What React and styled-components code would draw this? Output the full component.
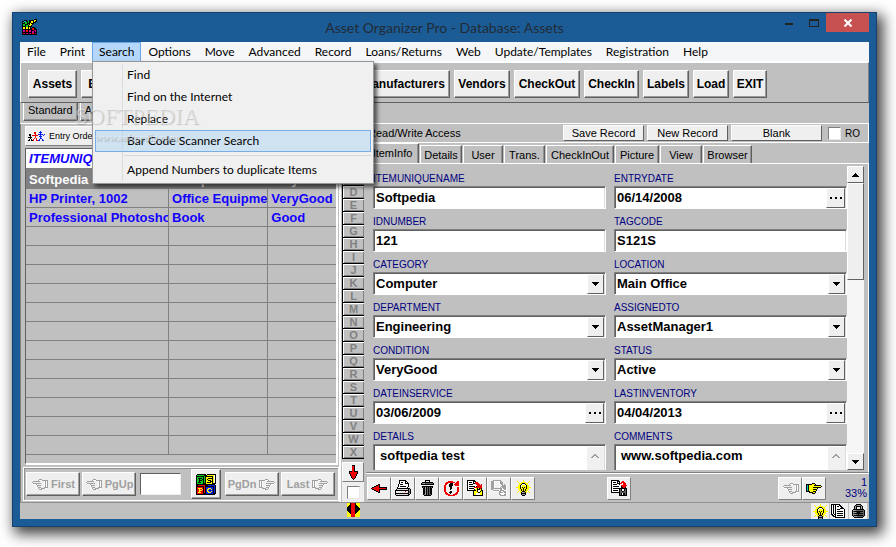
import React from "react";
import { useState } from "react";
import styled, { createGlobalStyle } from "styled-components";

const GlobalStyle = createGlobalStyle`
  * {
    box-sizing: border-box;
  }
  body {
    margin: 0;
    background: #fff;
    font-family: "Liberation Sans", Arial, sans-serif;
    font-size: 11px;
    color: #000;
  }
  svg {
    display: block;
    flex: none;
  }
  button, input, select, textarea {
    font: inherit;
    color: inherit;
    margin: 0;
    padding: 0;
    border: 0;
    border-radius: 0;
    outline: 0;
    background: none;
  }
`;

/* ---------- pixel icons ---------- */

const palette = {
  K: "#000",
  W: "#fff",
  R: "#f00000",
  Y: "#ffff00",
  L: "#d8d8d8",
  G: "#a0a0a0",
  D: "#606060",
  C: "#00c8c8",
  B: "#0020e8",
  N: "#00d020",
  M: "#d000a0",
};

const PixelIcon = ({ rows }) => {
  const width = Math.max(...rows.map((row) => row.length));
  return (
    <svg
      width={width}
      height={rows.length}
      viewBox={`0 0 ${width} ${rows.length}`}
      shapeRendering="crispEdges"
      aria-hidden="true"
    >
      {rows.map((row, y) =>
        row
          .split("")
          .map((c, x) =>
            palette[c] ? (
              <rect key={`${x}-${y}`} x={x} y={y} width="1" height="1" fill={palette[c]} />
            ) : null
          )
      )}
    </svg>
  );
};

const icons = {
  app: [
    "............KKK",
    "..KKK..KKKKKYYK",
    "KKCCKKNKKYYKYKK",
    "KCKNNKNKKYYKKK.",
    "KKKNNKKKYKKK...",
    "KNNKKKNKYYK....",
    "KNNKNNKYYK.....",
    "KKKKNNKKKK.....",
    "KYYKYYKYK.KKK..",
    "KYYKYYKYKKRRKK.",
    "KKKKKKKKKKRRKKK",
    "KMMKRRKMMKKKMMK",
    "KMMKRRKMMKMMKMK",
    "KKKKKKKKKKMMKKK",
    "KRRKMMKMMKRRKMK",
    "KKKKKKKKKKKKKKK",
  ],
  people: [
    "............B....",
    "......RR...BBB...",
    "......RR....B....",
    ".KK....R..BBBBB.B",
    ".KK.RRRRRR..B..B.",
    "..K....R...BBB...",
    "KKKK...R....B....",
    "..K...R.R...BB...",
    ".K.K.R..R..B..B..",
    "KK.KKR..RRBB..BB.",
  ],
  left: [
    ".......KK.......",
    ".....KKRK.......",
    "...KKRRRK.......",
    ".KKRRRRRKKKKKKKK",
    "KRRRRRRRRRRRRRRK",
    ".KKRRRRRKKKKKKKK",
    "...KKRRRK.......",
    ".....KKRK.......",
    ".......KK.......",
  ],
  down: [
    "...KKK...",
    "...RRK...",
    "...RRK...",
    "...RRK...",
    "...RRK...",
    "...RRK...",
    "KKKRRKKKK",
    "KRRRRRRRK",
    "KRRRRRRRK",
    ".KRRRRRK.",
    ".KRRRRRK.",
    "..KRRRK..",
    "..KRRRK..",
    "...KRK...",
    "....K....",
  ],
  printer: [
    "....KKKKKKK.....",
    "....KWWWWWKK....",
    "....KWKKWWKWK...",
    "....KWWWWWKKKK..",
    "...KWKKKWWWWWK..",
    "...KWWWWWWWWWK..",
    "...KWKKKKKKWWK..",
    "..KWWWWWWWWWK...",
    "..KKKKKKKKKKKKK.",
    ".KLLLLLLLLLLLKGK",
    "KKKKKKKKKKKKKKGK",
    "KWLWLWLWLWRLWKDK",
    "KLWLWLWLWLLWLKDK",
    "KKKKKKKKKKKKKKGK",
    "KLLLLLLLLLLLLKK.",
    ".KKKKKKKKKKKKK..",
  ],
  trash: [
    "....KKKKK....",
    "....K...K....",
    ".KKKKKKKKKKK.",
    "KDGGDDDDDDDDK",
    "KKKKKKKKKKKKK",
    ".............",
    ".KKKKKKKKKKK.",
    ".KDKGKDKDKDK.",
    "..KKGKDKDKK..",
    "..KKGKDKDKK..",
    "..KKGKDKDKK..",
    "..KKGKDKDKK..",
    "..KKGKDKDKK..",
    "..KKGKDKDKK..",
    "..KDGKDKDDK..",
    "...KKKKKKK...",
  ],
  redo: [
    "....RRRRR....RR",
    "..RRRRRRRRR.RRR",
    ".RRR..KKK..RRRR",
    ".RR..KKKK.RRRRR",
    "RR...KKKK..RRRR",
    "RR...KKK.......",
    "RR....KK.....RR",
    "RR....KK.....RR",
    "RR....K......RR",
    "RR...........RR",
    "RR....KK.....RR",
    ".RR..KKK....RR.",
    ".RRR..K....RRR.",
    "..RRRR...RRRR..",
    "....RRRRRRR....",
  ],
  copyDoc: [
    "KKKKKKKK........",
    "KWWWWWKKK.......",
    "KWKKKWKWRRR.....",
    "KWWWWWKKRRRR....",
    "KWKKKKWWWRRRR.R.",
    "KWWWWWWWWWRRRRR.",
    "KWKKKKKKWKRRRRR.",
    "KWWWWWWRRRRRRRR.",
    "KWKKKKKWWYKYKRK.",
    "KWWWWWWKYYKKKYK.",
    "KKKKKKKKKYKWWYKK",
    "......KYYYKWWKYK",
    "......KYYYYKKYYK",
    "......KYYWWWWYYK",
    "......KYYWWWWYYK",
    "......KKKKKKKKKK",
  ],
  copyDocOff: [
    "..GGGGGGGG......",
    "GGGWWWWWWGG.....",
    "GGGW....WGGG....",
    "GGGW....WGGG....",
    "GGGW....W.GG.G..",
    "GGGW....W..GGGGW",
    "GGGW....W.GGGGGW",
    "GGGW....WG.GGGGW",
    "GGGGGGGGGGG.GGGW",
    "GG.......GGWWGGW",
    ".WGGGGGGWGGGGWWW",
    "..WWWWW.GGWWGGG.",
    "........GGGGWGGW",
    "........GWWWWWGW",
    "........GGWWWGGW",
    ".........GGGGGGW",
  ],
  bulb: [
    ".......Y.......",
    ".Y.....Y.....Y.",
    "..Y..YYYYY..Y..",
    "...YYYKKKYYY...",
    "...YYKWWWKYY...",
    "..YYKWYYYWKYY..",
    "..YYKWYYYYKYY..",
    "YYYYKYKYKYKYYYY",
    "..YYKYYKYYKYY..",
    "..YYYKYKYKYYY..",
    "...YYKYKYKYY...",
    "..Y.YYKKKYY.Y..",
    ".Y..YKGGGKY..Y.",
    ".....KKKKK.....",
    ".....KGGGK.....",
    "......KKK......",
  ],
  save: [
    "KKKKKKKK........",
    "KWWWWWKKK..RR...",
    "KWKKKWKWK.RRRR..",
    "KWWWWWKKKRR.RRR.",
    "KWKKKKWWK...RRR.",
    "KWWWWWWWW.RRRRRR",
    "KWKKKKKKWWKRRRR.",
    "KWWWWWWWWWKKRRK.",
    "KWKKKKKKKKKKKKKK",
    "KWWWWWWWKDKWWKDK",
    "KWKKKKKWKDKWWKDK",
    "KWWWWWWWKDDKKDDK",
    "KKKKKKKKKDDDDDDK",
    "........KDKWKKDK",
    "........KDKWKKDK",
    "........KKKKKKKK",
  ],
  handRight: [
    "......KKK........",
    "KKKKKKYYYK.......",
    "KCKYYYYYKKKKKKK..",
    "KCKYYYYYYYYYYYYK.",
    "KCKYYYYKKKKKKKK..",
    "KCKYYYYYYYYK.....",
    "KCKYYYYKKKK......",
    "KCKYYYYYYYK......",
    "KKKKYYYKKK.......",
    "...KKKKYYK.......",
    "......KKK........",
  ],
  handRightOff: [
    "......GGG........",
    "GGGGGGWWWG.......",
    "GWGW....GGGGGGG..",
    "GWGW...........G.",
    "GWGW...GGGGGGGGW.",
    "GWGW.......GWWW..",
    "GWGW...GGGGW.....",
    "GWGW......GW.....",
    "GGGG...GGGW......",
    ".WWGGGG..GW......",
    "......GGGW.......",
  ],
  docs: [
    "KKKKKKKKK.......",
    "KWKWKWWWKK......",
    "KWKWKWKKWKK.....",
    "KWKWKWWWWWKK....",
    "KWKWKWWWWKKKK...",
    "KWKWKWKKKWWWWK..",
    "KWKWKWWWWWWWWK..",
    "KWKWKWKKKKKKWK..",
    "KWKWKWWWWWWWWK..",
    "KWKWKWKKKKKKWK..",
    "KKWKKWWWWWWWWK..",
    ".KKWKWKKKKKKWK..",
    "..KKKWWWWWWWWK..",
    "....KKKKKKKKKK..",
  ],
  lock: [
    "....KKKKK....",
    "...KDGGGDK...",
    "..KGKKKKKGK..",
    "..KGK...KGK..",
    "..KGK...KGK..",
    ".KKKKKKKKKKK.",
    "KGGGDDDDDDDDK",
    "KDKKKKKKKKKDK",
    "KGGGDKKKDDDDK",
    "KDKKKKKKKKKDK",
    "KGGGDDKDDDDDK",
    "KDKKKKKKKKKDK",
    ".KGGGDDDDDDK.",
    "..KKKKKKKKK..",
  ],
  splitter: [
    "YYYKRRRRKYYYY",
    "YYYKRRRRKYYYY",
    "YYKKRRRRKKYYY",
    "YKKKRRRRKKKYY",
    "KKKKRRRRKKKKY",
    "KKKKRRRRKKKKK",
    "KKKKRRRRKKKKK",
    "KKKKRRRRKKKKY",
    "YKKKRRRRKKKYY",
    "YYKKRRRRKKYYY",
    "YYYKRRRRKYYYY",
    "YYYYRRRRYYYYY",
    "YYYYRRRRYYYYY",
    "YYYYRRRRYYYYY",
  ],
  pspc: [
    ".KKKKKKKKK.KKKKKKKKK",
    "KNNNNNNNKKKYYYYYYYWK",
    "KKKKKKKKNKKKKKKKKYWK",
    "KNNNNNNKNKYYYYYYKYWK",
    "KNKKKKNKNKYYKKKKKYWK",
    "KNNKNNKKNKYKYYYYKYWK",
    "KNNKKKNKNKYYKKKYKYWK",
    "KNNKNNNKNKYYYYKKKYWK",
    "KNKKKNNKNKYKKKKYKYWK",
    "KNNNNNNKKKYYYYYYKKKK",
    "KKKKKKKKKKKKKKKKKKK.",
    "KKRRRRRRRKKKBBBBBBBK",
    "KKKKKKKKRKKKKKKKKKBK",
    "KRRRRRRKRKBBBBBBBKBK",
    "KRYYYYRKRKBBYYYBBKBK",
    "KRRYRRYKRKBYYBBYBKBK",
    "KRRYYYRKRKBYBBBBBKBK",
    "KRRYRRRKRKBYYBBYBKBK",
    "KRYYYRRKRKBBYYYBBKBK",
    "KRRRRRRKKKBBBBBBBKKK",
    "KKKKKKKKKKKKKKKKKKK.",
  ],
  caretDown: ["KKKKKKK", ".KKKKK.", "..KKK..", "...K..."],
  caretUp: ["...K...", "..KKK..", ".KKKKK.", "KKKKKKK"],
  chevronUp: ["...GG...", "..GGGG..", ".GG..GG.", "GG....GG"],
  dots: ["KK...KK...KK", "KK...KK...KK"],
};

const mirror = (rows) => {
  const width = Math.max(...rows.map((row) => row.length));
  return rows.map((row) => row.padEnd(width, ".").split("").reverse().join(""));
};

/* ---------- window ---------- */

const Page = styled.div`
  display: flex;
  min-height: 100vh;
  padding: 12px 19px 20px 12px;
`;

const Window = styled.div`
  display: flex;
  flex: 1;
  flex-direction: column;
  padding: 0 7px 7px;
  border: 1px solid #17406b;
  background: #1b5c97;
  box-shadow: 4px 5px 13px 2px rgba(0, 0, 0, 0.75);
`;

const TitleBar = styled.header`
  display: grid;
  grid-template-columns: 1fr auto 1fr;
  height: 29px;
  h1 {
    margin: 0;
    font: 14px/29px Lato, "Open Sans", sans-serif;
    color: #222b35;
  }
  .appIcon {
    padding: 6px 2px;
  }
  .controls {
    display: flex;
    justify-content: flex-end;
  }
`;

const ControlButton = styled.button`
  display: flex;
  align-items: center;
  justify-content: center;
  width: ${(props) => (props.$close ? "43px" : "25px")};
  height: 19px;
  background: ${(props) => (props.$close ? "#c75050" : "transparent")};
`;

const Client = styled.div`
  display: flex;
  flex: 1;
  flex-direction: column;
  background: #c0c0c0;
`;

const MenuBar = styled.nav`
  display: flex;
  height: 20px;
  background: #f5f6f7;
  border-bottom: 1px solid #fff;
  font-family: Lato, "Open Sans", sans-serif;
  font-size: 12px;
  .holder {
    position: relative;
  }
`;

const MenuButton = styled.button`
  height: 19px;
  padding: 0 6px;
  line-height: 18px;
  white-space: nowrap;
  border: 1px solid ${(props) => (props.$open ? "#66a7e8" : "transparent")};
  border-bottom: 0;
  background: ${(props) => (props.$open ? "#b5d7f9" : "transparent")};
`;

const DropMenu = styled.div`
  position: absolute;
  z-index: 5;
  top: 19px;
  left: 0;
  width: 282px;
  padding: 2px;
  border: 1px solid #979797;
  background: linear-gradient(#dcdcdc, #dcdcdc) 29px 2px / 1px calc(100% - 4px) no-repeat #f0f0f0;
  box-shadow: 3px 3px 4px rgba(0, 0, 0, 0.6);
  hr {
    height: 1px;
    margin: 3px 0 3px 29px;
    border: 0;
    background: #d7d7d7;
  }
`;

const DropItem = styled.button`
  display: block;
  width: 100%;
  height: 22px;
  padding-left: 31px;
  line-height: 20px;
  text-align: left;
  border: 1px solid ${(props) => (props.$active ? "#78aee5" : "transparent")};
  background: ${(props) => (props.$active ? "rgba(181, 215, 243, 0.55)" : "transparent")};
`;

const Watermark = styled.div`
  position: absolute;
  z-index: 6;
  top: 62px;
  left: -17px;
  pointer-events: none;
  font-family: "Liberation Serif", serif;
  font-size: 23px;
  line-height: 25px;
  color: rgba(255, 255, 255, 0.4);
  text-shadow: 1px 1px 1px rgba(90, 90, 90, 0.3);
  small {
    display: block;
    padding-left: 20px;
    font: bold 10px/18px "Liberation Serif", serif;
    text-shadow: 1px 1px 1px rgba(90, 90, 90, 0.3);
  }
`;

const ToolBar = styled.div`
  display: flex;
  gap: 4px;
  height: 41px;
  padding: 7px;
  border: 1px solid #fff;
  border-right-color: #808080;
  border-bottom: 1px solid #606060;
`;

const ToolButton = styled.button`
  height: 28px;
  width: ${(props) => props.$width}px;
  flex: none;
  font-weight: bold;
  font-size: 12px;
  white-space: nowrap;
  background: #efefef;
  border: 1px solid;
  border-color: #fff #606060 #606060 #fff;
  box-shadow: inset -1px -1px #9a9a9a;
`;

const ViewTabs = styled.div`
  display: flex;
  gap: 2px;
  height: 20px;
  padding-left: 3px;
  button {
    height: 18px;
    padding: 0 4px 3px;
    border: solid #606060;
    border-width: 0 1px 1px 0;
    border-left: 1px solid #fff;
    box-shadow: inset -1px -1px #909090;
  }
`;

const Main = styled.main`
  display: grid;
  grid-template-columns: 321px 25px 1fr;
  flex: 1;
  border-top: 1px solid #fff;
`;

/* ---------- list side ---------- */

const ListSide = styled.section`
  display: flex;
  flex-direction: column;
  padding: 2px 0 1px 2px;
  border-left: 1px solid #808080;
  border-right: 2px solid #fff;
`;

const OrderButton = styled.button`
  display: flex;
  align-items: center;
  gap: 4px;
  width: 90px;
  height: 20px;
  margin: 0 0 2px 2px;
  padding-left: 2px;
  font-size: 9px;
  white-space: nowrap;
  background: #efefef;
  border: 1px solid;
  border-color: #fff #808080 #808080 #fff;
`;

const GridFrame = styled.div`
  flex: 1;
  width: 312px;
  margin-left: 2px;
  border: 1px solid;
  border-color: #606060 #fff #fff #606060;
  box-shadow: 1px 1px #fff;
`;

const ItemTable = styled.table`
  width: 100%;
  table-layout: fixed;
  border-collapse: collapse;
  color: #1400ff;
  font-size: 13px;
  font-weight: bold;
  text-align: left;
  th {
    height: 20px;
    padding: 0 3px;
    overflow: hidden;
    font-style: italic;
    background: #fff;
    border-right: 1px solid #808080;
    border-bottom: 2px solid #808080;
  }
  td {
    height: 19px;
    padding: 1px 2px 0 3px;
    overflow: hidden;
    line-height: 17px;
    white-space: nowrap;
    border-right: 1px solid #808080;
    border-bottom: 1px solid #808080;
  }
  td:last-child, th:last-child {
    border-right: 0;
  }
  .selected td {
    color: #fff;
    background: #808080;
  }
`;

const Pager = styled.div`
  display: flex;
  align-items: center;
  gap: 2px;
  width: 316px;
  height: 34px;
  margin-top: 3px;
  padding: 0 2px;
  border: 1px solid #fff;
  box-shadow: inset 1px 1px #909090;
  input {
    width: 41px;
    height: 22px;
    margin: 0 8px 0 2px;
    padding: 0 3px;
    background: #fff;
    border: 1px solid;
    border-color: #606060 #efefef #efefef #606060;
  }
`;

const PageButton = styled.button`
  display: flex;
  align-items: center;
  justify-content: center;
  gap: 3px;
  width: ${(props) => (props.$square ? "30px" : "54px")};
  height: ${(props) => (props.$square ? "30px" : "24px")};
  margin-right: ${(props) => (props.$square ? "2px" : "0")};
  font-size: 11px;
  font-weight: bold;
  color: #a0a0a0;
  background: #efefef;
  border: 1px solid;
  border-color: #fff #606060 #606060 #fff;
  box-shadow: inset -1px -1px #a0a0a0;
`;

/* ---------- letters ---------- */

const Letters = styled.div`
  display: flex;
  flex-direction: column;
  align-items: center;
  padding: 2px 2px 0 1px;
  background: #c0c0c0;
`;

const LetterButton = styled.button`
  width: 22px;
  height: 13px;
  font-size: 11px;
  font-weight: bold;
  line-height: 11px;
  color: #808080;
  border: solid #000;
  border-width: 0 0 1px 1px;
  box-shadow: inset 1px 1px #fff, inset -1px -1px #808080;
`;

const ArrowButton = styled.button`
  display: flex;
  align-items: center;
  justify-content: center;
  width: 22px;
  height: 20px;
  margin: ${(props) => (props.$last ? "3px 0 0" : "0 0 1px")};
  background: #efefef;
  border: 1px solid;
  border-color: #fff #808080 #808080 #fff;
`;

const CheckBox = styled.input.attrs({ type: "checkbox" })`
  appearance: none;
  width: 13px;
  height: 13px;
  background: #fff;
  border: 1px solid;
  border-color: #808080 #e8e8e8 #e8e8e8 #808080;
  &:checked {
    background: #000;
  }
`;

const CheckHolder = styled.div`
  display: flex;
  flex: 1;
  align-items: center;
  justify-content: center;
  width: 22px;
  background: #efefef;
`;

/* ---------- record side ---------- */

const RecordSide = styled.section`
  display: flex;
  flex-direction: column;
  min-width: 0;
`;

const RecordHead = styled.div`
  display: flex;
  align-items: center;
  gap: 3px;
  height: 19px;
  padding: 0 8px 0 2px;
  border-right: 1px solid #fff;
  border-bottom: 1px solid #fff;
  span {
    flex: 1;
  }
  label {
    display: flex;
    align-items: center;
    gap: 4px;
    margin-left: 3px;
    font-size: 10px;
  }
`;

const HeadButton = styled.button`
  width: ${(props) => props.$width}px;
  height: 16px;
  line-height: 15px;
  background: #efefef;
  border: 1px solid;
  border-color: #fff #606060 #606060 #fff;
`;

const RecordTabs = styled.div`
  display: flex;
  align-items: flex-end;
  gap: 1px;
  height: 21px;
  border-bottom: 1px solid #fff;
`;

const RecordTab = styled.button`
  height: ${(props) => (props.$active ? "20px" : "18px")};
  padding: ${(props) => (props.$active ? "0 0 2px" : "0")};
  width: ${(props) => props.$width}px;
  white-space: nowrap;
  border: solid;
  border-width: 1px 1px 0;
  border-color: #fff #606060 #fff #fff;
  box-shadow: inset -1px 0 #909090;
`;

const FormArea = styled.div`
  display: grid;
  grid-template-columns: 1fr 18px;
  flex: 1;
  padding: 2px 3px 2px 7px;
  border-right: 1px solid #fff;
  border-bottom: 1px solid #808080;
`;

const Fields = styled.form`
  display: grid;
  grid-template-columns: 1fr 1fr;
  column-gap: 8px;
  align-content: start;
`;

const Field = styled.div`
  label {
    display: block;
    height: 20px;
    padding-top: 4px;
    font-size: 10px;
    line-height: 18px;
    color: #000080;
  }
`;

const FieldBox = styled.div`
  position: relative;
  display: flex;
  height: ${(props) => (props.$memo ? "26px" : "23px")};
  background: #fff;
  border: 1px solid;
  border-color: #808080 #fff #fff #808080;
  border-bottom-width: ${(props) => (props.$memo ? "0" : "1px")};
  box-shadow: inset 1px 1px #606060, inset -1px 0 #dcdcdc;
  font-size: 13px;
  font-weight: bold;
  input, select, textarea {
    flex: 1;
    min-width: 0;
    padding: 0 2px;
    appearance: none;
  }
  textarea {
    padding: 3px 6px 0;
    resize: none;
    overflow: hidden;
  }
`;

const SmallButton = styled.span`
  display: flex;
  align-items: center;
  justify-content: center;
  width: ${(props) => (props.$wide ? "19px" : "17px")};
  margin: 1px 1px 0 0;
  background: #efefef;
  border: 1px solid;
  border-color: #fff #606060 #606060 #fff;
`;

const SelectArrow = styled(SmallButton)`
  position: absolute;
  top: 0;
  right: 0;
  bottom: 0;
  pointer-events: none;
`;

const MemoBar = styled.span`
  width: 17px;
  margin: 2px 1px 0 0;
  padding: 7px 4px;
  background: #f0f0f0;
`;

const ScrollTrack = styled.div`
  display: flex;
  flex-direction: column;
  width: 17px;
  background: #f6f6f6;
  .thumb {
    height: 97px;
    margin-bottom: auto;
    background: #efefef;
    border: 1px solid;
    border-color: #fff #606060 #606060 #fff;
  }
`;

const ScrollButton = styled.button`
  display: flex;
  align-items: center;
  justify-content: center;
  height: 17px;
  background: #efefef;
  border: 1px solid;
  border-color: #fff #606060 #606060 #fff;
`;

const RecordTools = styled.div`
  display: flex;
  align-items: center;
  height: 29px;
  padding-left: 1px;
  border-top: 1px solid #fff;
  .save {
    margin-left: 72px;
  }
  .hands {
    display: flex;
    margin-left: auto;
  }
  .count {
    width: 43px;
    padding-right: 2px;
    text-align: right;
    line-height: 11px;
    color: #000080;
  }
`;

const IconButton = styled.button`
  display: flex;
  align-items: center;
  justify-content: center;
  width: 24px;
  height: 23px;
  background: #efefef;
  border: 1px solid;
  border-color: #fff #808080 #808080 #fff;
`;

const StatusBar = styled.footer`
  display: grid;
  grid-template-columns: 327px 1fr auto;
  height: 17px;
  overflow: hidden;
  border-top: 1px solid #909090;
  .tray {
    display: flex;
    gap: 1px;
    padding-right: 2px;
  }
`;

const TrayButton = styled.button`
  display: flex;
  justify-content: center;
  width: 18px;
  height: 16px;
  padding-top: 1px;
  background: #efefef;
`;

/* ---------- data ---------- */

const menus = [
  "File",
  "Print",
  "Search",
  "Options",
  "Move",
  "Advanced",
  "Record",
  "Loans/Returns",
  "Web",
  "Update/Templates",
  "Registration",
  "Help",
];

const tools = [
  ["Assets", 49],
  ["Employees", 78],
  ["Departments", 101],
  ["Locations", 85],
  ["Manufacturers", 93],
  ["Vendors", 56],
  ["CheckOut", 66],
  ["CheckIn", 55],
  ["Labels", 46],
  ["Load", 36],
  ["EXIT", 34],
];

const items = [
  ["Softpedia", "Computer", "VeryGood"],
  ["HP Printer, 1002", "Office Equipment", "VeryGood"],
  ["Professional Photoshop", "Book", "Good"],
];

const emptyRows = Array.from({ length: 12 }, () => ["", "", ""]);

const recordTabs = [
  ["ItemInfo", 53],
  ["Details", 42],
  ["User", 40],
  ["Trans.", 41],
  ["CheckInOut", 68],
  ["Picture", 44],
  ["View", 42],
  ["Browser", 49],
];

const fields = [
  { name: "ITEMUNIQUENAME", value: "Softpedia" },
  { name: "ENTRYDATE", value: "06/14/2008", type: "date" },
  { name: "IDNUMBER", value: "121" },
  { name: "TAGCODE", value: "S121S" },
  { name: "CATEGORY", value: "Computer", type: "select" },
  { name: "LOCATION", value: "Main Office", type: "select" },
  { name: "DEPARTMENT", value: "Engineering", type: "select" },
  { name: "ASSIGNEDTO", value: "AssetManager1", type: "select" },
  { name: "CONDITION", value: "VeryGood", type: "select" },
  { name: "STATUS", value: "Active", type: "select" },
  { name: "DATEINSERVICE", value: "03/06/2009", type: "date" },
  { name: "LASTINVENTORY", value: "04/04/2013", type: "date" },
  { name: "DETAILS", value: "softpedia test", type: "memo" },
  { name: "COMMENTS", value: "www.softpedia.com", type: "memo" },
];

const RecordField = ({ field }) => {
  const { name, value, type } = field;
  return (
    <Field>
      <label htmlFor={name}>{name}</label>
      <FieldBox $memo={type === "memo"}>
        {type === "select" ? (
          <>
            <select id={name} defaultValue={value}>
              <option>{value}</option>
            </select>
            <SelectArrow>
              <PixelIcon rows={icons.caretDown} />
            </SelectArrow>
          </>
        ) : type === "memo" ? (
          <>
            <textarea id={name} rows={1} defaultValue={value} />
            <MemoBar>
              <PixelIcon rows={icons.chevronUp} />
            </MemoBar>
          </>
        ) : (
          <input id={name} type="text" defaultValue={value} />
        )}
        {type === "date" && (
          <SmallButton as="button" type="button" $wide aria-label={`Pick ${name}`}>
            <PixelIcon rows={icons.dots} />
          </SmallButton>
        )}
      </FieldBox>
    </Field>
  );
};

const App = () => {
  const [openMenu, setOpenMenu] = useState("Search");
  const [tab, setTab] = useState("ItemInfo");

  return (
    <Page>
      <GlobalStyle />
      <Window>
        <TitleBar>
          <div className="appIcon">
            <PixelIcon rows={icons.app} />
          </div>
          <h1>Asset Organizer Pro - Database: Assets</h1>
          <div className="controls">
            <ControlButton aria-label="Minimize">
              <svg width="8" height="12">
                <rect y="6" width="8" height="2" fill="#222" />
              </svg>
            </ControlButton>
            <ControlButton aria-label="Maximize">
              <svg width="10" height="8" shapeRendering="crispEdges">
                <path d="M0 0h10v8H0zM1 2v5h8V2z" fill="#222" fillRule="evenodd" />
              </svg>
            </ControlButton>
            <ControlButton $close aria-label="Close">
              <svg width="8" height="8">
                <path d="M0.5 0.5l7 7M7.5 0.5l-7 7" stroke="#fff" strokeWidth="2" />
              </svg>
            </ControlButton>
          </div>
        </TitleBar>

        <Client>
          <MenuBar>
            {menus.map((name) => (
              <div className="holder" key={name}>
                <MenuButton
                  $open={openMenu === name}
                  onClick={() => setOpenMenu(openMenu === name ? "" : name)}
                >
                  {name}
                </MenuButton>
                {name === "Search" && openMenu === name && (
                  <>
                    <DropMenu>
                      <DropItem>Find</DropItem>
                      <DropItem>Find on the Internet</DropItem>
                      <DropItem>Replace</DropItem>
                      <DropItem $active>Bar Code Scanner Search</DropItem>
                      <hr />
                      <DropItem>Append Numbers to duplicate Items</DropItem>
                    </DropMenu>
                    <Watermark>
                      SOFTPEDIA
                      <small>www.softpedia.com</small>
                    </Watermark>
                  </>
                )}
              </div>
            ))}
          </MenuBar>

          <ToolBar>
            {tools.map(([name, width]) => (
              <ToolButton key={name} $width={width}>
                {name}
              </ToolButton>
            ))}
          </ToolBar>

          <ViewTabs>
            <button>Standard</button>
            <button>Advanced</button>
          </ViewTabs>

          <Main>
            <ListSide>
              <OrderButton>
                <PixelIcon rows={icons.people} />
                Entry Order
              </OrderButton>
              <GridFrame>
                <ItemTable>
                  <colgroup>
                    <col style={{ width: "46%" }} />
                    <col style={{ width: "32%" }} />
                    <col />
                  </colgroup>
                  <thead>
                    <tr>
                      <th>ITEMUNIQUENAME</th>
                      <th>CATEGORY</th>
                      <th>COND</th>
                    </tr>
                  </thead>
                  <tbody>
                    {items.concat(emptyRows).map((row, index) => (
                      <tr key={index} className={index === 0 ? "selected" : ""}>
                        {row.map((cell, i) => (
                          <td key={i}>{cell}</td>
                        ))}
                      </tr>
                    ))}
                  </tbody>
                </ItemTable>
              </GridFrame>
              <Pager>
                <PageButton>
                  <PixelIcon rows={mirror(icons.handRightOff)} />
                  First
                </PageButton>
                <PageButton>
                  <PixelIcon rows={mirror(icons.handRightOff)} />
                  PgUp
                </PageButton>
                <input type="text" aria-label="Go to record" />
                <PageButton $square aria-label="Search panel">
                  <PixelIcon rows={icons.pspc} />
                </PageButton>
                <PageButton>
                  PgDn
                  <PixelIcon rows={icons.handRightOff} />
                </PageButton>
                <PageButton>
                  Last
                  <PixelIcon rows={icons.handRightOff} />
                </PageButton>
              </Pager>
            </ListSide>

            <Letters>
              <ArrowButton aria-label="Previous letters">
                <PixelIcon rows={[...icons.down].reverse()} />
              </ArrowButton>
              {"ABCDEFGHIJKLMNOPQRSTUVWX".split("").map((letter) => (
                <LetterButton key={letter}>{letter}</LetterButton>
              ))}
              <ArrowButton $last aria-label="Next letters">
                <PixelIcon rows={icons.down} />
              </ArrowButton>
              <CheckHolder>
                <CheckBox aria-label="Filter by letter" />
              </CheckHolder>
            </Letters>

            <RecordSide>
              <RecordHead>
                <span>Read/Write Access</span>
                <HeadButton $width={81}>Save Record</HeadButton>
                <HeadButton $width={81}>New Record</HeadButton>
                <HeadButton $width={91}>Blank</HeadButton>
                <label>
                  <CheckBox />
                  RO
                </label>
              </RecordHead>
              <RecordTabs>
                {recordTabs.map(([name, width]) => (
                  <RecordTab
                    key={name}
                    $width={width}
                    $active={tab === name}
                    onClick={() => setTab(name)}
                  >
                    {name}
                  </RecordTab>
                ))}
              </RecordTabs>
              <FormArea>
                <Fields>
                  {fields.map((field) => (
                    <RecordField key={field.name} field={field} />
                  ))}
                </Fields>
                <ScrollTrack>
                  <ScrollButton aria-label="Scroll up">
                    <PixelIcon rows={icons.caretUp} />
                  </ScrollButton>
                  <div className="thumb" />
                  <ScrollButton aria-label="Scroll down">
                    <PixelIcon rows={icons.caretDown} />
                  </ScrollButton>
                </ScrollTrack>
              </FormArea>
              <RecordTools>
                <IconButton aria-label="Back">
                  <PixelIcon rows={icons.left} />
                </IconButton>
                <IconButton aria-label="Print">
                  <PixelIcon rows={icons.printer} />
                </IconButton>
                <IconButton aria-label="Delete">
                  <PixelIcon rows={icons.trash} />
                </IconButton>
                <IconButton aria-label="Refresh">
                  <PixelIcon rows={icons.redo} />
                </IconButton>
                <IconButton aria-label="Copy record">
                  <PixelIcon rows={icons.copyDoc} />
                </IconButton>
                <IconButton aria-label="Paste record">
                  <PixelIcon rows={icons.copyDocOff} />
                </IconButton>
                <IconButton aria-label="Tip">
                  <PixelIcon rows={icons.bulb} />
                </IconButton>
                <IconButton className="save" aria-label="Save">
                  <PixelIcon rows={icons.save} />
                </IconButton>
                <div className="hands">
                  <IconButton aria-label="Previous record">
                    <PixelIcon rows={mirror(icons.handRightOff)} />
                  </IconButton>
                  <IconButton aria-label="Next record">
                    <PixelIcon rows={icons.handRight} />
                  </IconButton>
                </div>
                <div className="count">
                  1<br />
                  33%
                </div>
              </RecordTools>
            </RecordSide>
          </Main>

          <StatusBar>
            <span />
            <div>
              <PixelIcon rows={icons.splitter} />
            </div>
            <div className="tray">
              <TrayButton aria-label="Tip">
                <PixelIcon rows={icons.bulb} />
              </TrayButton>
              <TrayButton aria-label="Documents">
                <PixelIcon rows={icons.docs} />
              </TrayButton>
              <TrayButton aria-label="Lock">
                <PixelIcon rows={icons.lock} />
              </TrayButton>
            </div>
          </StatusBar>
        </Client>
      </Window>
    </Page>
  );
};

export default App;
